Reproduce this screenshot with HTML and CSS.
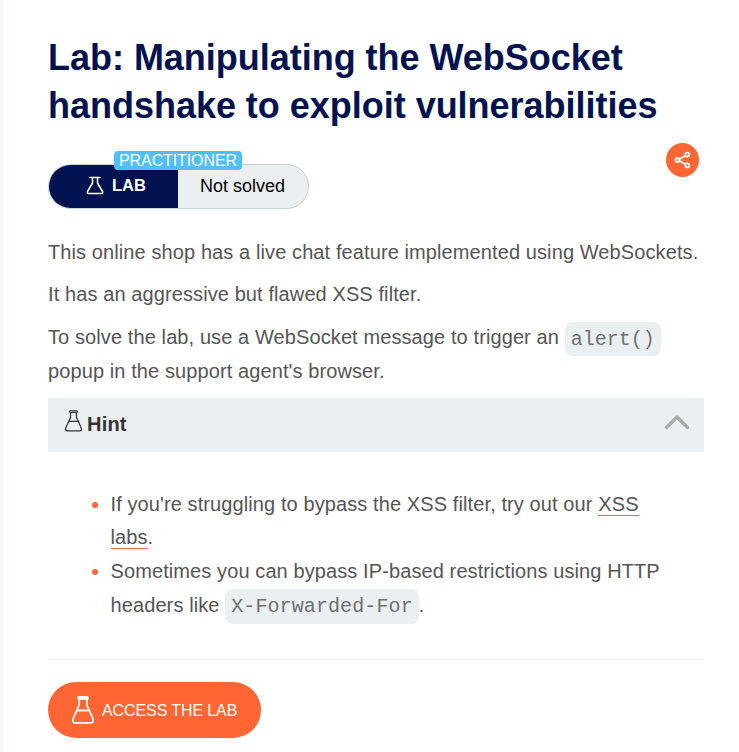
FILE: index.html
```html
<!DOCTYPE html>
<html lang="en">
<head>
<meta charset="utf-8">
<title>Lab: Manipulating the WebSocket handshake to exploit vulnerabilities</title>
<link rel="stylesheet" href="styles.css">
</head>
<body>
<svg class="defs" aria-hidden="true"><symbol id="flask" viewBox="0 0 22 28"><path d="M7 1h8q1 0 1 1t-1 1H7Q6 3 6 2t1-1M7.200 3v6L1.200 22.500Q-.2 26.800 3 26.800h16q3.200 0 1.800-4.300L14.800 9V3M5 14.500h12"/></symbol></svg>
<main class="page">
  <h1>Lab: Manipulating the WebSocket<br>handshake to exploit vulnerabilities</h1>
  <div class="status-row">
    <div class="status">
      <span class="level">PRACTITIONER</span>
      <div class="kind"><svg viewBox="0 0 18 19"><path d="M4 1.500h10M6.500 1.500v5.500L1.500 15.500Q.8 17.500 2.500 17.500h13q1.700 0 1-2L11.500 7V1.500"/></svg><b>LAB</b></div>
      <div class="state">Not solved</div>
    </div>
    <button class="share" aria-label="Share"><svg viewBox="0 0 33 34"><path d="M19.600 12.700 13.200 16.200M13.200 17.800l6.400 3.500"/><circle cx="21.300" cy="11.600" r="2"/><circle cx="11.500" cy="17" r="2"/><circle cx="21.300" cy="22.400" r="2"/></svg></button>
  </div>
  <p>This online shop has a live chat feature implemented using WebSockets.</p>
  <p>It has an aggressive but flawed XSS filter.</p>
  <p class="task">To solve the lab, use a WebSocket message to trigger an <code>alert()</code><br>popup in the support agent's browser.</p>
  <div class="hint"><svg class="flask"><use href="#flask"/></svg><b>Hint</b><svg class="chevron" viewBox="0 0 26 16"><path d="m2.500 13.500 10.500-10.500L23.500 13.500"/></svg></div>
  <ul>
    <li>If you're struggling to bypass the XSS filter, try out our <a href="#">XSS</a><br><a href="#">labs</a>.</li>
    <li>Sometimes you can bypass IP-based restrictions using HTTP<br>headers like <code>X-Forwarded-For</code>.</li>
  </ul>
  <hr>
  <a class="access" href="#"><svg class="flask"><use href="#flask"/></svg><span>ACCESS THE LAB</span></a>
</main>
</body>
</html>
```
FILE: styles.css
```css
* { box-sizing: border-box; }
body { margin: 0; height: 752px; overflow: hidden; border-left: 3px solid #f0f9fc; background: #fff; color: #555; font: 20px/34px "Liberation Sans", Arial, sans-serif; letter-spacing: .1px; }
.defs { position: absolute; width: 0; height: 0; }
svg { fill: none; stroke: currentColor; stroke-linecap: round; stroke-linejoin: round; }
.page { width: 656px; margin-left: 45px; padding-top: 34px; }
h1 { margin: 0; color: #00124f; font-size: 36px; line-height: 48px; letter-spacing: -.02px; white-space: nowrap; }
.status-row { display: flex; justify-content: space-between; width: 651px; margin-top: 13px; }
.status { position: relative; display: flex; width: 261px; height: 45px; margin-top: 21px; border: 1px solid #c8ced1; border-radius: 23px; background: #eaeff2; color: #000; font-size: 18px; letter-spacing: 0; }
.level { position: absolute; left: 65px; top: -14px; width: 128px; height: 19px; border-radius: 4px; background: #4dc0ff; color: #fff; font-size: 16px; line-height: 19px; letter-spacing: -.1px; text-align: center; }
.kind { display: flex; width: 129px; padding: 3px 0 0 37px; border-radius: 22px 0 0 22px; background: #00124f; color: #fff; line-height: 35px; font-size: 16.500px; }
.kind svg { width: 18px; height: 19px; margin: 8px 8px 0 0; stroke-width: 1.500; }
.state { padding-left: 22px; line-height: 42px; }
.share { width: 33px; height: 34px; padding: 0; border: 0; border-radius: 50%; background: #ff6633; color: #fff; }
.share svg { display: block; width: 33px; height: 34px; stroke-width: 1.800; }
p { margin: 0 0 8px; white-space: nowrap; }
.status-row + p { margin-top: 26px; }
.task { margin-top: 9px; }
code { display: inline-block; height: 34px; margin: 2px 0 -2px; padding: 0 6px; border-radius: 8px; background: #eaeff2; color: #707070; font: 20px/36px "Liberation Mono", monospace; letter-spacing: 0; vertical-align: top; }
.hint { display: flex; height: 54px; margin-top: 10px; padding-left: 17px; background: #eaeff2; color: #333; line-height: 52px; letter-spacing: .2px; }
.hint .flask { width: 17px; height: 22px; margin: 12px 5px 0 0; stroke-width: 1.600; }
.hint .chevron { width: 26px; height: 16px; margin: 16px 14px 0 auto; color: #aaa; stroke-width: 3.400; }
ul { margin: 35.800px 0 0; padding: 0; list-style: none; line-height: 33.600px; white-space: nowrap; }
li { position: relative; padding-left: 62.500px; }
li::before { content: ""; position: absolute; left: 44px; top: 14.200px; width: 6px; height: 6px; border-radius: 50%; background: #ff6633; }
li a { color: inherit; text-decoration: none; border-bottom: 1px solid #ff6633; }
li code { height: 35px; margin: 0 0 -1px; letter-spacing: .1px; }
hr { height: 1px; margin: 36.800px 0 22px; border: 0; background: #f2f2f2; }
.access { display: flex; align-items: center; width: 213px; height: 56px; padding-left: 24px; border-radius: 28px; background: #ff6633; color: #fff; font-size: 16px; letter-spacing: -.1px; text-decoration: none; }
.access span { padding-top: 2px; }
.access .flask { width: 22px; height: 28px; margin-right: 8px; stroke-width: 1.800; }
```
